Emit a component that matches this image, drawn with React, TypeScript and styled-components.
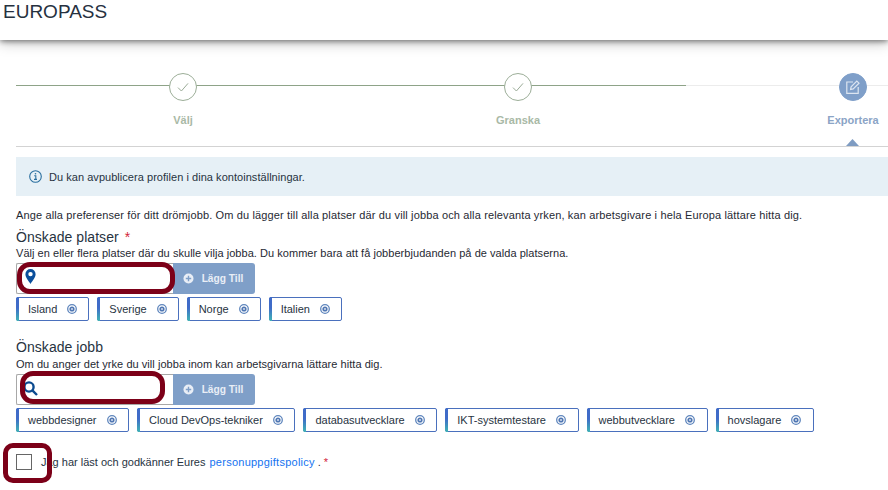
import React from "react";
import styled, { createGlobalStyle } from "styled-components";

const Global = createGlobalStyle`
  html, body { margin: 0; padding: 0; background: #fff; }
  body { font-family: "Liberation Sans", Arial, sans-serif; color: #24303c; overflow: hidden; }
`;
const Page = styled.div`position: relative; width: 888px; height: 490px; overflow: hidden; background: #fff;`;
const Header = styled.header`
  height: 40px; background: #fff; padding-left: 3px;
  font-size: 19px; line-height: 24px; color: #26313f;
  box-shadow: 0 1px 6px rgba(0,0,0,.55), 0 4px 14px rgba(0,0,0,.18);
`;
const Main = styled.main`padding: 33px 0 0 16px;`;
const Stepper = styled.div`position: relative; height: 73px; border-bottom: 1px solid #d3d3d3;`;
const Track = styled.div`
  position: absolute; left: 0; top: 12px; height: 1px; width: 670px; background: #8ea388;
  &::after { content: ""; position: absolute; left: 670px; top: 0; width: 202px; height: 1px; background: #ececec; }
`;
const Steps = styled.div`position: relative; display: grid; grid-template-columns: repeat(3, 335px); margin-left: -1px;`;
const Step = styled.div<{ $active?: boolean }>`
  display: flex; flex-direction: column; align-items: center; width: 336px;
  font-size: 11px; font-weight: 700; line-height: 14px;
  color: ${p => p.$active ? "#8ba4c6" : "#a9b9a6"};
`;
const Circle = styled.div<{ $active?: boolean }>`
  width: 28px; height: 28px; box-sizing: border-box; border-radius: 50%; margin-bottom: 12px; background: ${p => p.$active ? "#7f9fc9" : "#fff"};
  border: 1px solid ${p => p.$active ? "#7f9fc9" : "#9cae98"};
  display: flex; align-items: center; justify-content: center;
`;
const Caret = styled.div`
  position: absolute; left: 830px; bottom: 0; width: 13px; height: 7px; background: #7f9cc2;
  clip-path: polygon(50% 0, 100% 100%, 0 100%);
`;
const Banner = styled.div`
  margin-top: 10px; height: 39px; background: #e6f0f6; display: flex; align-items: center; gap: 7px; padding-left: 13px;
  font-size: 11px; letter-spacing: .04px; color: #27333f;
`;
const Intro = styled.p`margin: 13px 0 0; font-size: 11px; line-height: 13px; letter-spacing: .14px; color: #1f2933;`;
const Heading = styled.h2`margin: 7px 0 0; font-size: 14px; font-weight: 400; line-height: 17px; color: #27333f; letter-spacing: .05px;`;
const Req = styled.span`color: #d2233a; margin-left: 2px;`;
const Help = styled.p<{ $top?: number }>`margin: ${p => p.$top ?? 1}px 0 0; font-size: 11px; line-height: 13px; letter-spacing: .045px; color: #1f2933;`;
const InputRow = styled.div`display: flex; width: 239px; height: 31px; margin-top: 3px;`;
const InputBox = styled.div`
  width: 157px; box-sizing: border-box; border: 1px solid #a8a8a8; border-right: 0; border-radius: 2px 0 0 2px;
  background: #fff; padding: 5px 0 0 8px;
`;
const AddButton = styled.div`
  flex: 1; background: #7f9fc8; border-radius: 0 3px 3px 0; display: flex; align-items: center; justify-content: center; gap: 8px; padding-right: 2px;
  color: #e9eef6; font-size: 10.2px; font-weight: 700;
`;
const Chips = styled.div`display: flex; gap: 8px; margin-top: 3px;`;
const Chip = styled.div<{ $end: number }>`
  position: relative; box-sizing: border-box; height: 24px; display: flex; align-items: center; gap: 10px; padding: 0 ${p => p.$end}px 0 11px;
  border: 1px solid #4a70bd; border-radius: 2px; font-size: 11px; color: #27333f;
  &::before { content: ""; position: absolute; left: -1px; top: -1px; bottom: -1px; width: 3px; border-radius: 2px 0 0 2px; background: linear-gradient(#3f6bc8 45%, #3fb5b5); }
`;
const Section = styled.section`margin-top: 18px;`;
const Agree = styled.div`display: flex; align-items: center; margin-top: 22px; font-size: 11px; color: #27333f;`;
const Box = styled.div`width: 16px; height: 16px; box-sizing: border-box; border: 1px solid #666; margin-right: 9px;`;
const Policy = styled.a`color: #1473f0; margin: 0 3px 0 4px; letter-spacing: .25px;`;
const Star = styled.span`color: #d2233a; margin-left: 3px;`;
const Mark = styled.div<{ $l: number; $t: number; $w: number; $h: number; $r: number }>`
  position: absolute; box-sizing: border-box; left: ${p => p.$l}px; top: ${p => p.$t}px; width: ${p => p.$w}px; height: ${p => p.$h}px;
  border: 5px solid #7c0018; border-radius: ${p => p.$r}px; pointer-events: none;
`;
const SearchSvg = styled.svg`display: block; margin: 1px 0 0 -2px;`;
const PinSvg = styled.svg`display: block;`;

const XIcon = () => (
  <svg width="10" height="10" viewBox="0 0 10 10">
    <circle cx="5" cy="5" r="4.3" fill="none" stroke="#5f86bd" strokeWidth="1.3" />
    <circle cx="5" cy="5" r="2.6" fill="#4f76b2" />
    <path d="M3.9 3.9l2.2 2.2M6.1 3.9L3.9 6.1" stroke="#dfe7f2" strokeWidth=".7" />
  </svg>
);
const Check = () => (
  <svg width="14" height="14" viewBox="0 0 14 14" fill="none"><path d="M2 7.6l3.4 3.4L12 3.4" stroke="#9aab97" strokeWidth="1" /></svg>
);
const Edit = () => (
  <svg width="16" height="16" viewBox="0 0 16 16" fill="none" stroke="#dce5f1" strokeWidth="1.2">
    <path d="M8 3H1.8v11.4h11.4V8" /><path d="M5.6 10.4l.5-2.6L11.8 2l2.2 2.2-5.8 5.7z" />
  </svg>
);
const Info = () => (
  <svg width="13" height="13" viewBox="0 0 13 13" fill="none">
    <circle cx="6.5" cy="6.5" r="5.8" stroke="#2a6f9f" strokeWidth="1.1" />
    <circle cx="6.5" cy="3.8" r=".8" fill="#2a6f9f" /><path d="M5.2 5.7h1.6v3.6M5 9.4h3" stroke="#2a6f9f" strokeWidth="1.1" />
  </svg>
);
const Pin = () => (
  <PinSvg width="11" height="15" viewBox="0 0 11 15"><path fillRule="evenodd" d="M5.5 15C3.8 11.8.4 8.6.4 5.2a5.1 5.1 0 0 1 10.2 0C10.6 8.6 7.2 11.8 5.5 15zm0-7.7a2.2 2.2 0 1 0 0-4.4 2.2 2.2 0 0 0 0 4.4z" fill="#0b4f9c" /></PinSvg>
);
const Search = () => (
  <SearchSvg width="15" height="15" viewBox="0 0 15 15" fill="none" stroke="#0b4a8f" strokeWidth="2.4"><circle cx="6" cy="6" r="4.6" /><path d="M9.6 9.6L14 14" /></SearchSvg>
);
const Plus = () => (
  <svg width="11" height="11" viewBox="0 0 11 11"><circle cx="5.5" cy="5.5" r="5" fill="#e9eef6" /><path d="M5.5 2.8v5.4M2.8 5.5h5.4" stroke="#7f9fc8" strokeWidth="1.4" /></svg>
);

const places = ["Island", "Sverige", "Norge", "Italien"];
const jobs = ["webbdesigner", "Cloud DevOps-tekniker", "databasutvecklare", "IKT-systemtestare", "webbutvecklare", "hovslagare"];

export default function App() {
  return (
    <Page>
      <Global />
      <Header>EUROPASS</Header>
      <Main>
        <Stepper>
          <Track />
          <Steps>
            <Step><Circle><Check /></Circle>Välj</Step>
            <Step><Circle><Check /></Circle>Granska</Step>
            <Step $active><Circle $active><Edit /></Circle>Exportera</Step>
          </Steps>
          <Caret />
        </Stepper>
        <Banner><Info />Du kan avpublicera profilen i dina kontoinställningar.</Banner>
        <Intro>Ange alla preferenser för ditt drömjobb. Om du lägger till alla platser där du vill jobba och alla relevanta yrken, kan arbetsgivare i hela Europa lättare hitta dig.</Intro>
        <Heading>Önskade platser <Req>*</Req></Heading>
        <Help>Välj en eller flera platser där du skulle vilja jobba. Du kommer bara att få jobberbjudanden på de valda platserna.</Help>
        <InputRow>
          <InputBox><Pin /></InputBox>
          <AddButton><Plus />Lägg Till</AddButton>
        </InputRow>
        <Chips>{places.map(p => <Chip key={p} $end={11}>{p}<XIcon /></Chip>)}</Chips>
        <Section>
          <Heading>Önskade jobb</Heading>
          <Help $top={2}>Om du anger det yrke du vill jobba inom kan arbetsgivarna lättare hitta dig.</Help>
          <InputRow>
            <InputBox><Search /></InputBox>
            <AddButton><Plus />Lägg Till</AddButton>
          </InputRow>
          <Chips>{jobs.map(p => <Chip key={p} $end={11.6}>{p}<XIcon /></Chip>)}</Chips>
        </Section>
        <Agree><Box />Jag har läst och godkänner Eures <Policy>personuppgiftspolicy</Policy> .<Star>*</Star></Agree>
      </Main>
      <Mark $l={17} $t={262} $w={158} $h={32} $r={13} />
      <Mark $l={20} $t={371} $w={145} $h={33} $r={13} />
      <Mark $l={3} $t={443} $w={49} $h={40} $r={10} />
    </Page>
  );
}
